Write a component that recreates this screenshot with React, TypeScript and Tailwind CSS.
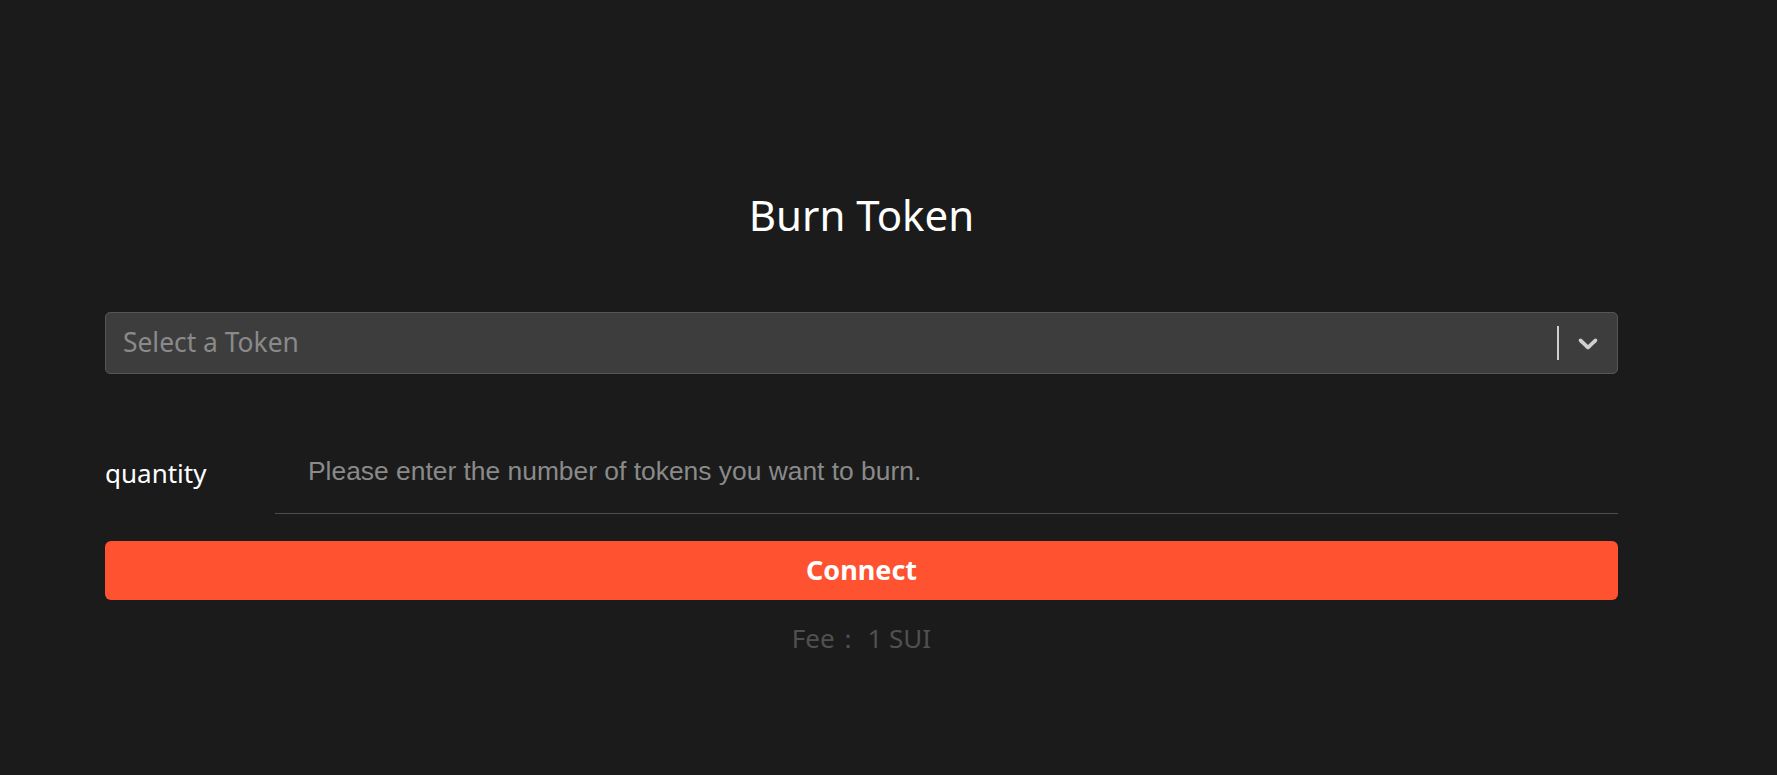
export default function App() {
  return (
    <div className="min-h-[775px] w-full bg-[#1b1b1b] font-['Noto_Sans',sans-serif]">
      <div className="ml-[105px] w-[1513px] pt-[186px]">
        <h1 className="text-center text-[42px] leading-[58px] text-white">Burn Token</h1>

        <div className="mt-[68px] flex h-[62px] items-center rounded-[5px] border border-[#555555] bg-[#3d3d3d]">
          <span className="flex-1 pl-[17px] text-[26.4px] text-[#8a8a8a]">Select a Token</span>
          <div className="h-[34px] w-[2px] bg-[#cfcfcf]" />
          <div className="flex w-[58px] items-center justify-center">
            <svg viewBox="0 0 20 20" className="h-8 w-8 fill-[#cfcfcf]">
              <path d="M4.516 7.548c0.436-0.446 1.043-0.481 1.576 0l3.908 3.747 3.908-3.747c0.533-0.481 1.141-0.446 1.574 0 0.436 0.445 0.408 1.197 0 1.615-0.406 0.418-4.695 4.502-4.695 4.502-0.217 0.223-0.502 0.335-0.787 0.335s-0.57-0.112-0.789-0.335c0 0-4.287-4.084-4.695-4.502s-0.436-1.17 0-1.615z" />
            </svg>
          </div>
        </div>

        <div className="mt-[59px] flex items-center">
          <label className="w-[170px] text-[26px] text-white">quantity</label>
          <div className="flex-1 border-b border-[#4c4c4c]">
            <input
              className="h-[80px] w-full bg-transparent pb-[4px] pl-[33px] font-['Liberation_Sans',sans-serif] text-[26.4px] text-white outline-none placeholder:text-[#8a8a8a]"
              placeholder="Please enter the number of tokens you want to burn."
            />
          </div>
        </div>

        <button className="mt-[27px] h-[59px] w-full rounded-[6px] bg-[#fe5230] text-[27px] font-bold text-white">
          Connect
        </button>

        <p className="mt-[19px] text-center text-[26px] text-[#505050]">Fee： 1 SUI</p>
      </div>
    </div>
  );
}
